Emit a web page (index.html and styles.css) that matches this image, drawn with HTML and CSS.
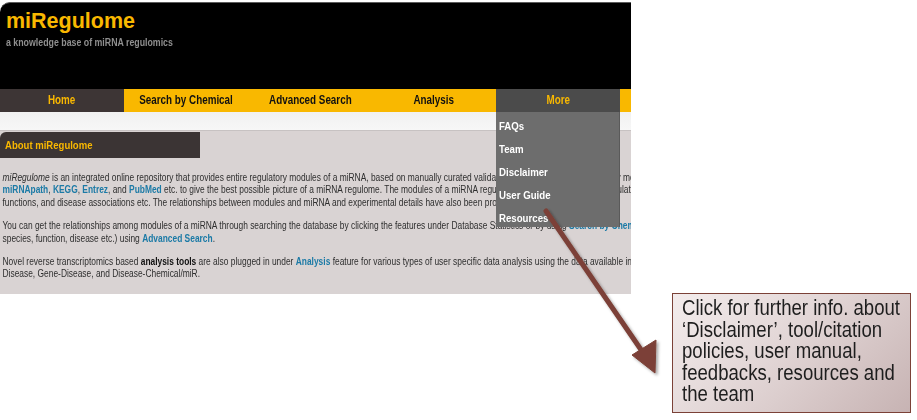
FILE: index.html
```html
<!DOCTYPE html>
<html lang="en">
<head>
<meta charset="utf-8">
<title>miRegulome</title>
<link rel="stylesheet" href="styles.css">
</head>
<body>
<div class="page">
  <div class="site">
    <header class="masthead">
      <h1 class="logo">miRegulome</h1>
      <p class="tagline"><span class="tagline-text">a knowledge base of miRNA regulomics</span></p>
    </header>
    <nav class="menu">
      <a class="tab tab-home"><span class="label">Home</span></a>
      <a class="tab"><span class="label">Search by Chemical</span></a>
      <a class="tab"><span class="label">Advanced Search</span></a>
      <a class="tab"><span class="label">Analysis</span></a>
      <div class="tab tab-more"><span class="label">More</span>
        <ul class="dropdown">
          <li><span class="item">FAQs</span></li>
          <li><span class="item">Team</span></li>
          <li><span class="item">Disclaimer</span></li>
          <li><span class="item">User Guide</span></li>
          <li><span class="item">Resources</span></li>
        </ul>
      </div>
      <a class="tab"><span class="label">Statistics</span></a>
    </nav>
    <div class="strip"></div>
    <section class="about">
      <h2 class="about-title"><span class="about-label">About miRegulome</span></h2>
      <p class="text"><i>miRegulome</i> is an integrated online repository that provides entire regulatory modules of a miRNA, based on manually curated validated data. So here each regulatory module contains data from<br>
      <a class="link">miRNApath</a>, <a class="link">KEGG</a>, <a class="link">Entrez</a>, and <a class="link">PubMed</a> etc. to give the best possible picture of a miRNA regulome. The modules of a miRNA regulome include all its upstream regulators, targets, target<br>
      functions, and disease associations etc. The relationships between modules and miRNA and experimental details have also been provided.</p>
      <p class="text">You can get the relationships among modules of a miRNA through searching the database by clicking the features under Database Statistics or by using <a class="link">Search by Chemical</a>, and the other features (miRNA,<br>
      species, function, disease etc.) using <a class="link">Advanced Search</a>.</p>
      <p class="text">Novel reverse transcriptomics based <b>analysis tools</b> are also plugged in under <a class="link">Analysis</a> feature for various types of user specific data analysis using the data available in miRegulome, e.g. miRNA-<br>
      Disease, Gene-Disease, and Disease-Chemical/miR.</p>
    </section>
  </div>

  <svg class="arrow" width="917" height="420" viewBox="0 0 917 420" aria-hidden="true">
    <defs>
      <filter id="sh" x="-20%" y="-20%" width="140%" height="140%">
        <feDropShadow dx="2" dy="2" stdDeviation="1.6" flood-color="#000" flood-opacity="0.35"/>
      </filter>
    </defs>
    <g filter="url(#sh)" fill="#7b4137" stroke="#7b4137">
      <line x1="546" y1="211" x2="646" y2="357" stroke-width="5" stroke-linecap="round"/>
      <polygon points="655,373 632,355 656,340" stroke-width="1"/>
    </g>
  </svg>

  <div class="callout">
    <p class="callout-text">Click for further info. about<br>‘Disclaimer’, tool/citation<br>policies, user manual,<br>feedbacks, resources and<br>the team</p>
  </div>
</div>
</body>
</html>
```

FILE: styles.css
```css
html, body {
  margin: 0;
  padding: 0;
  background: #ffffff;
}

.page {
  position: relative;
  width: 917px;
  height: 420px;
  padding-top: 2px;
  box-sizing: border-box;
  overflow: hidden;
  font-family: "Liberation Sans", Arial, sans-serif;
}

.site {
  width: 631px;
  overflow: hidden;
  position: relative;
}

.masthead {
  height: 87px;
  box-sizing: border-box;
  background: #000;
  border-top: 1px solid #5c5c5c;
  border-top-left-radius: 10px;
  padding: 5px 0 0 6px;
}

.logo {
  margin: 0;
  font-size: 21.5px;
  line-height: 26px;
  font-weight: bold;
  color: #f9b800;
}

.tagline {
  margin: 3px 0 0;
  font-size: 10px;
  line-height: 12px;
  font-weight: bold;
  color: #8f8f8f;
  white-space: nowrap;
}

.tagline-text {
  display: inline-block;
  transform: scaleX(0.88);
  transform-origin: 0 50%;
}

.menu {
  display: flex;
  height: 23px;
  background: #f9b800;
}

.tab {
  flex: 0 0 124px;
  text-align: center;
  font-size: 12px;
  font-weight: bold;
  line-height: 23px;
  color: #111;
  white-space: nowrap;
}

.label {
  display: inline-block;
  transform: scaleX(0.82);
}

.tab-home {
  background: #3d3535;
  color: #f9b800;
}

.tab-more {
  position: relative;
  background: #4b4b4b;
  color: #f9b800;
}

.dropdown {
  position: absolute;
  z-index: 5;
  left: 0;
  top: 23px;
  width: 124px;
  height: 115px;
  box-sizing: border-box;
  margin: 0;
  padding: 3px 0 0 3px;
  list-style: none;
  background: #6d6d6d;
  border-right: 1px solid #5a5a5a;
  text-align: left;
}

.dropdown li {
  height: 23px;
  line-height: 23px;
  color: #fff;
  font-size: 11.5px;
  font-weight: bold;
}

.item {
  display: inline-block;
  transform: scaleX(0.84);
  transform-origin: 0 50%;
}

.strip {
  height: 18px;
  background: linear-gradient(#f1f1f1, #f7f7f7);
}

.about {
  background: #d9d3d3;
  border-top: 1px solid #c7c2c2;
  padding: 1px 0 13px;
}

.about-title {
  width: 200px;
  height: 26px;
  box-sizing: border-box;
  margin: 0;
  padding-left: 5px;
  background: #3b3434;
  border-top-left-radius: 6px;
  font-size: 11.5px;
  line-height: 26px;
  font-weight: bold;
  color: #f9b800;
  white-space: nowrap;
}

.about-label {
  display: inline-block;
  transform: scaleX(0.83);
  transform-origin: 0 50%;
}

.text {
  margin: 14px 0 0;
  padding-left: 3px;
  font-size: 10px;
  line-height: 12.4px;
  color: #2e2e2e;
  white-space: nowrap;
  transform: scaleX(0.84);
  transform-origin: 0 0;
}

.text + .text {
  margin-top: 11px;
}

.text b {
  color: #111;
}

.link {
  color: #1b7aa6;
  font-weight: bold;
}

.arrow {
  position: absolute;
  left: 0;
  top: 0;
  pointer-events: none;
  z-index: 10;
}

.callout {
  position: absolute;
  left: 672px;
  top: 293px;
  width: 239px;
  height: 120px;
  box-sizing: border-box;
  padding: 3px 0 0 9px;
  border: 1.5px solid #7b4137;
  background: linear-gradient(135deg, #f3ecec 0%, #e2d6d6 45%, #c7b3b3 100%);
}

.callout-text {
  margin: 0;
  font-size: 22px;
  line-height: 21.5px;
  color: #1e1e1e;
  white-space: nowrap;
  transform: scaleX(0.845);
  transform-origin: 0 0;
}
```
